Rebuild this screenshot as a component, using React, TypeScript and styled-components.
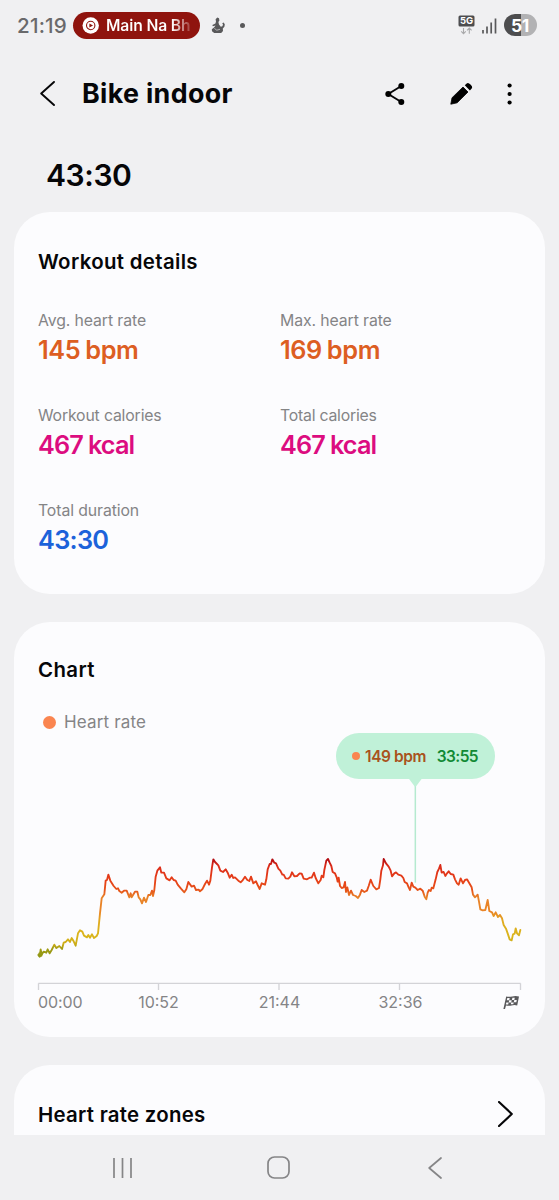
import React from "react";
import styled, { createGlobalStyle } from "styled-components";

const Global = createGlobalStyle`
  * { box-sizing: border-box; }
  body { margin: 0; background: #f0f0f2; font-family: Inter, "Liberation Sans", sans-serif; }
`;

const Screen = styled.div`
  width: 559px;
  height: 1200px;
  display: flex;
  flex-direction: column;
  overflow: hidden;
  background: #f0f0f2;
  color: #060608;
`;

const Text = styled.span<{ $size: number; $weight?: number; $track?: number; $color?: string }>`
  font-size: ${(p) => p.$size}px;
  font-weight: ${(p) => p.$weight ?? 400};
  letter-spacing: ${(p) => p.$track ?? 0}px;
  color: ${(p) => p.$color ?? "#060608"};
  white-space: pre;
`;

const StatusBar = styled.header`
  height: 50px;
  display: flex;
  align-items: center;
  padding: 0 22px 0 17px;
`;

const NowPlaying = styled.div`
  width: 127px;
  height: 27px;
  margin-left: auto;
  border-radius: 14px;
  background: #8f140e;
  display: flex;
  align-items: center;
  gap: 6px;
  padding: 0 10px 0 9px;
`;

const SongTitle = styled.div`
  white-space: nowrap;
  font-size: 15.7px;
  font-weight: 600;
  line-height: 24px;
  padding-top: 1px;
  letter-spacing: -0.15px;
  color: transparent;
  background: linear-gradient(90deg, #fff 66px, rgba(255, 255, 255, 0.1) 86px);
  background-clip: text;
  -webkit-background-clip: text;
`;

const StatusLeft = styled.div`
  width: 183px;
  display: flex;
  align-items: center;
`;

const StatusIcons = styled.div`
  display: flex;
  align-items: center;
  gap: 14px;
  flex: 1;
  padding-left: 11px;
`;

const StatusRight = styled.div`
  display: flex;
  align-items: center;
  gap: 7px;
  margin-left: auto;
`;

const Battery = styled.div`
  width: 33px;
  height: 22px;
  border-radius: 11px;
  background: linear-gradient(90deg, #4d4d4f 51%, #b2b2b4 51%);
  display: flex;
  align-items: center;
  justify-content: center;
  padding-right: 1px;
  font-size: 17.5px;
  font-weight: 700;
  letter-spacing: -0.4px;
  color: #fff;
`;

const AppBar = styled.div`
  height: 88px;
  display: flex;
  align-items: center;
  padding: 0 46px 1px 40px;
`;

const Title = styled.h1`
  margin: 0 auto 0 27px;
  font-size: 26.8px;
  font-weight: 700;
  letter-spacing: 0.35px;
  line-height: 33px;
`;

const Actions = styled.div`
  display: grid;
  grid-template-columns: 65px 57px 6px;
  align-items: center;
`;

const Elapsed = styled.div`
  height: 74px;
  padding: 17px 0 0 46px;
  line-height: 40px;
`;

const Content = styled.main`
  height: 923px;
  display: flex;
  flex-direction: column;
  gap: 28px;
  padding: 0 14px;
  overflow: hidden;
`;

const Card = styled.section<{ $height: number }>`
  height: ${(p) => p.$height}px;
  flex: none;
  border-radius: 36px;
  background: #fcfcfe;
  padding: 0 24px;
`;

const CardHeader = styled.div<{ $height?: number }>`
  display: flex;
  align-items: center;
  justify-content: space-between;
  height: ${(p) => p.$height ?? 98}px;
  padding-right: 8px;
`;

const Metrics = styled.div`
  display: grid;
  grid-template-columns: 242px 1fr;
  grid-auto-rows: 95px;
`;

const Metric = styled.div`
  display: flex;
  flex-direction: column;
`;

const MetricLabel = styled(Text)`
  line-height: 22px;
`;

const MetricValue = styled.div<{ $color: string; $track: number }>`
  display: flex;
  gap: 5px;
  margin-top: 1px;
  line-height: 34px;
  font-size: 25.3px;
  font-weight: 600;
  letter-spacing: ${(p) => p.$track}px;
  color: ${(p) => p.$color};
`;

const Legend = styled.div`
  display: flex;
  align-items: center;
  gap: 8px;
  height: 24px;
  margin-top: -6px;
  padding-left: 5px;
`;

const Dot = styled.i<{ $size: number; $color: string }>`
  width: ${(p) => p.$size}px;
  height: ${(p) => p.$size}px;
  flex: none;
  border-radius: 50%;
  background: ${(p) => p.$color};
`;

const Plot = styled.div`
  position: relative;
  height: 257px;
  margin: -1px -6px 0 -13px;
  svg { display: block; }
`;

const Tooltip = styled.div`
  position: absolute;
  left: 311px;
  top: 0;
  width: 159px;
  height: 46px;
  border-radius: 23px;
  background: #c0f1d8;
  display: flex;
  align-items: center;
  justify-content: space-between;
  padding: 0 17px 0 16px;
`;

const Reading = styled.div`
  display: flex;
  align-items: center;
  gap: 5px;
`;

const AxisLabels = styled.div`
  display: grid;
  grid-template-columns: 60px 121px 121px 121px 1fr;
  align-items: center;
  height: 22px;
  margin-top: 1px;
  padding-right: 1px;
  & > :nth-child(n + 2) { justify-self: center; }
  & > :last-child { justify-self: end; }
`;

const NavBar = styled.nav`
  height: 65px;
  display: flex;
  align-items: center;
  padding: 0 117px 0 112px;
  justify-content: space-between;
`;

const HomeKey = styled.div`
  display: flex;
  padding-right: 4px;
`;

const TRACE =
  "40,345 44,350 47,328 50,343 56,335 64,338 68,328 74,340 80,330 88,314 94,324 103,318 111,327 116,308 122,306 129,298 135,306 140,294 146,304 152,317 159,280 165,271 172,275 177,287 186,292 190,285 195,293 201,283 207,294 215,288 219,280 225,220 230,175 238,163 242,122 246,120 250,104 256,122 266,138 274,147 279,145 283,153 290,158 297,152 305,152 313,172 317,160 320,172 330,155 337,155 341,172 346,178 351,190 357,173 363,186 370,165 376,165 381,152 384,168 388,150 392,110 397,92 405,82 409,98 417,98 424,115 434,121 440,112 446,120 452,122 458,134 468,146 478,157 484,148 490,126 500,140 507,137 513,150 521,149 525,154 532,148 540,132 546,122 552,134 556,122 561,82 565,58 570,66 576,72 580,76 586,92 594,96 602,88 608,98 614,113 620,104 625,114 630,112 640,122 647,127 652,122 660,110 667,120 673,123 678,110 685,130 693,124 698,135 704,147 710,130 720,134 724,118 728,88 734,72 738,72 742,58 748,68 753,70 760,86 766,92 772,104 776,104 782,115 790,116 796,110 801,97 808,109 816,108 824,100 830,101 836,116 846,118 854,113 860,113 867,98 872,114 880,130 887,120 890,107 895,112 898,90 904,62 909,57 914,68 919,78 923,96 930,100 935,112 938,125 941,113 945,138 950,144 956,142 960,126 963,156 967,142 972,165 978,152 984,165 992,168 999,174 1005,164 1010,150 1018,156 1026,152 1031,138 1037,119 1045,138 1054,148 1062,144 1066,118 1069,92 1074,76 1076,57 1083,70 1091,80 1097,92 1101,109 1108,100 1113,97 1120,104 1129,107 1135,114 1139,126 1146,130 1151,142 1155,150 1160,128 1165,140 1171,143 1178,150 1186,146 1193,152 1199,170 1204,178 1208,158 1212,150 1217,153 1220,143 1225,145 1232,118 1237,96 1242,86 1246,75 1250,98 1256,96 1261,108 1266,100 1271,94 1277,102 1285,104 1290,118 1296,130 1301,134 1307,115 1314,130 1320,120 1326,118 1333,130 1340,142 1344,164 1350,172 1358,164 1362,185 1366,208 1373,211 1381,210 1388,180 1393,213 1401,217 1406,228 1412,217 1419,231 1425,225 1431,235 1436,255 1443,266 1448,280 1454,298 1460,301 1464,283 1469,281 1472,265 1476,280 1482,286 1486,270";

const ZONES: [number, string][] = [
  [57, "#b0090f"],
  [78, "#dc2c1a"],
  [120, "#e63f18"],
  [150, "#e6521a"],
  [172, "#e88228"],
  [215, "#ea8526"],
  [245, "#e0ac20"],
  [290, "#d9b51c"],
  [312, "#cdac18"],
  [325, "#a39c14"],
  [350, "#8f9716"],
];

const TICKS = [38.5, 158.5, 279, 399.5, 520.5];

function HeartRateTrace() {
  return (
    <svg width="502" height="257" viewBox="0 -321 1506 771">
      <defs>
        <linearGradient id="zones" gradientUnits="userSpaceOnUse" x1="0" x2="0" y1="57" y2="350">
          {ZONES.map(([y, c]) => (
            <stop key={y} offset={(y - 57) / 293} stopColor={c} />
          ))}
        </linearGradient>
      </defs>
      <path d="M1171 -186V128" stroke="#b5ead0" strokeWidth="4.5" />
      <path d="M1150 -186h42l-18 24q-3 3-6 0z" fill="#c0f1d8" />
      <path d="M40 430H1487" stroke="#d3d3d7" strokeWidth="4" />
      {TICKS.map((x) => (
        <path key={x} d={`M${(x - 25) * 3} 430v20`} stroke="#d3d3d7" strokeWidth="4" />
      ))}
      <circle cx="46" cy="344" r="7" fill="#969a14" />
      <polyline points={TRACE} fill="none" stroke="url(#zones)" strokeWidth="5.6" strokeLinejoin="round" strokeLinecap="round" />
    </svg>
  );
}

const MusicIcon = () => (
  <svg width="18" height="17" viewBox="0 0 18 17" style={{ flex: "none" }}>
    <circle cx="8.7" cy="8.5" r="8.2" fill="#fff" />
    <circle cx="8.7" cy="8.5" r="4.2" fill="none" stroke="#8f140e" strokeWidth="1.1" />
    <path d="M7.4 6.4v4.2l3.6-2.1z" fill="#8f140e" />
  </svg>
);

const FigureIcon = () => (
  <svg width="15" height="17" viewBox="0 0 15 17" fill="#59595b">
    <path d="M4.6 2.2 6.3.6 8 1.2l.4 2.2-1 1.6.6 2.4L9.8 9.8l1.6-.6.6-1.8-.8-1.2 1.4-.6 1.2 1.6-.4 2.6-1.6 1.8.2 2.4-1.8 2H3.2L1 14.2l-.2-2L3 10.4 4.6 8.6 1.8 9.2 1.4 8l3-1.4L5 4.6z" />
    <path d="m3.4 11.4 2.4 1.8 3.2-.9" fill="none" stroke="#f0f0f2" strokeWidth=".6" />
  </svg>
);

const NetworkIcon = () => (
  <svg width="17" height="20" viewBox="0 0 17 20">
    <rect x=".5" y=".5" width="16" height="11" rx="1.5" fill="#4d4d4f" />
    <text x="8.5" y="9.4" textAnchor="middle" fontFamily="Inter, sans-serif" fontSize="9.5" fontWeight="700" fill="#fff">5G</text>
    <path d="M5.5 13v5.6M3.2 16.4l2.3 2.3 2.3-2.3M11.3 18.8v-5.6M9 15.4l2.3-2.3 2.3 2.3" fill="none" stroke="#a9a9ab" strokeWidth="1.1" />
  </svg>
);

const SignalIcon = () => (
  <svg width="15" height="17" viewBox="0 0 15 17">
    <path d="M1 13v3.5M5 9.5v7M9.2 5.5v11M13.5 1.5v15" stroke="#59595b" strokeWidth="1.7" />
  </svg>
);

const ShareIcon = () => (
  <svg width="20" height="24" viewBox="0 0 20 24">
    <path d="M16.3 4 3.3 12l13 8" fill="none" stroke="#060608" strokeWidth="1.9" />
    <circle cx="16.3" cy="4.1" r="3" />
    <circle cx="3.3" cy="12" r="3" />
    <circle cx="16.3" cy="19.9" r="3" />
  </svg>
);

const PencilIcon = () => (
  <svg width="23" height="23" viewBox="0 0 23 23">
    <path d="M.8 22.2 2 15.8 13 5l5 5L7.2 20.8z" strokeLinejoin="round" stroke="#060608" strokeWidth=".8" />
    <path d="m14.8 3.3 1.9-1.8q1.1-.8 2.4-.1 1.9 1 2.8 2.9.6 1.2-.2 2.2l-1.8 2z" />
  </svg>
);

const MoreIcon = () => (
  <svg width="6" height="24" viewBox="0 0 6 24">
    <circle cx="2.6" cy="3.5" r="2.1" />
    <circle cx="2.6" cy="12" r="2.1" />
    <circle cx="2.6" cy="20.5" r="2.1" />
  </svg>
);

function Chevron({ w, h, width, color, right }: { w: number; h: number; width: number; color: string; right?: boolean }) {
  const d = right ? `M1 1 ${w - 1.2} ${h / 2} 1 ${h - 1}` : `M${w - 1} 1 1.2 ${h / 2} ${w - 1} ${h - 1}`;
  return (
    <svg width={w} height={h} viewBox={`0 0 ${w} ${h}`}>
      <path d={d} fill="none" stroke={color} strokeWidth={width} strokeLinecap="round" strokeLinejoin="round" />
    </svg>
  );
}

const FlagIcon = () => (
  <svg width="17" height="15" viewBox="0 0 17 15">
    <path d="M3.2 1.4Q6 2.2 9.2 1.4T16 1.4L14.2 10.4Q11.4 9.8 8.6 10.4T3 10.4L2 14H.4z" fill="#59595b" />
    <path d="M4.3 3h2.4l-.5 2.2H3.8zM9.4 2.8h2.4l-.5 2.2H8.9zM6.2 5.3h2.5l-.5 2.3H5.7zM11.3 5h2.5l-.5 2.3h-2.5zM3.3 7.6h2.3L5.2 9.4H2.9zM8.2 7.6h2.5l-.4 1.6H7.8z" fill="#fcfcfe" />
  </svg>
);

const METRICS = [
  { label: "Avg. heart rate", value: "145", unit: "bpm", color: "#dd5e22", track: -0.4, labelTrack: -0.1 },
  { label: "Max. heart rate", value: "169", unit: "bpm", color: "#dd5e22", track: -0.4, labelTrack: -0.1 },
  { label: "Workout calories", value: "467", unit: "kcal", color: "#dc0c80", track: -0.9, labelTrack: -0.16 },
  { label: "Total calories", value: "467", unit: "kcal", color: "#dc0c80", track: -0.9, labelTrack: -0.22 },
  { label: "Total duration", value: "43:30", unit: "", color: "#1c62da", track: -0.7, labelTrack: -0.1 },
];

export default function App() {
  return (
    <Screen>
      <Global />
      <StatusBar>
        <StatusLeft>
          <Text $size={20.6} $weight={500} $color="#69696b" $track={0.2}>21:19</Text>
          <NowPlaying>
            <MusicIcon />
            <SongTitle>Main Na Bh</SongTitle>
          </NowPlaying>
        </StatusLeft>
        <StatusIcons>
          <FigureIcon />
          <Dot $size={5} $color="#59595b" />
        </StatusIcons>
        <StatusRight>
          <NetworkIcon />
          <SignalIcon />
          <Battery>51</Battery>
        </StatusRight>
      </StatusBar>
      <AppBar>
        <Chevron w={15} h={25} width={1.9} color="#060608" />
        <Title>Bike indoor</Title>
        <Actions>
          <ShareIcon />
          <PencilIcon />
          <MoreIcon />
        </Actions>
      </AppBar>
      <Elapsed>
        <Text $size={30} $weight={600} $track={-0.4}>43:30</Text>
      </Elapsed>
      <Content>
        <Card $height={382}>
          <CardHeader>
            <Text $size={20.4} $weight={580} $track={0.35}>Workout details</Text>
          </CardHeader>
          <Metrics>
            {METRICS.map((m) => (
              <Metric key={m.label}>
                <MetricLabel $size={15.8} $color="#848486" $track={m.labelTrack}>{m.label}</MetricLabel>
                <MetricValue $color={m.color} $track={m.track}>
                  <span>{m.value}</span>
                  {m.unit && <span>{m.unit}</span>}
                </MetricValue>
              </Metric>
            ))}
          </Metrics>
        </Card>
        <Card $height={415}>
          <CardHeader $height={94}>
            <Text $size={20.4} $weight={580} $track={0.4}>Chart</Text>
          </CardHeader>
          <Legend>
            <Dot $size={13} $color="#fa8550" />
            <Text $size={17} $color="#848486" $track={0.15}>Heart rate</Text>
          </Legend>
          <Plot>
            <HeartRateTrace />
            <Tooltip>
              <Reading>
                <Dot $size={8} $color="#fa8550" />
                <Text $size={15.5} $weight={600} $color="#a9531c" $track={-0.42}>149 bpm</Text>
              </Reading>
              <Text $size={15.5} $weight={600} $color="#118a35" $track={-0.6}>33:55</Text>
            </Tooltip>
          </Plot>
          <AxisLabels>
            <Text $size={16} $color="#848486" $track={-0.1}>00:00</Text>
            <Text $size={16} $color="#848486">10:52</Text>
            <Text $size={16} $color="#848486">21:44</Text>
            <Text $size={16} $color="#848486">32:36</Text>
            <FlagIcon />
          </AxisLabels>
        </Card>
        <Card $height={120}>
          <CardHeader>
            <Text $size={20.4} $weight={580} $track={0.28}>Heart rate zones</Text>
            <Chevron w={15} h={26} width={2.1} color="#060608" right />
          </CardHeader>
        </Card>
      </Content>
      <NavBar>
        <svg width="21" height="22" viewBox="0 0 21 22">
          <path d="M2 1v20M10.5 1v20M19 1v20" stroke="#858587" strokeWidth="1.7" />
        </svg>
        <HomeKey>
          <svg width="23" height="23" viewBox="0 0 23 23">
            <rect x="1" y="1" width="21" height="21" rx="6.5" fill="none" stroke="#858587" strokeWidth="1.7" />
          </svg>
        </HomeKey>
        <Chevron w={14} h={22} width={1.7} color="#858587" />
      </NavBar>
    </Screen>
  );
}
